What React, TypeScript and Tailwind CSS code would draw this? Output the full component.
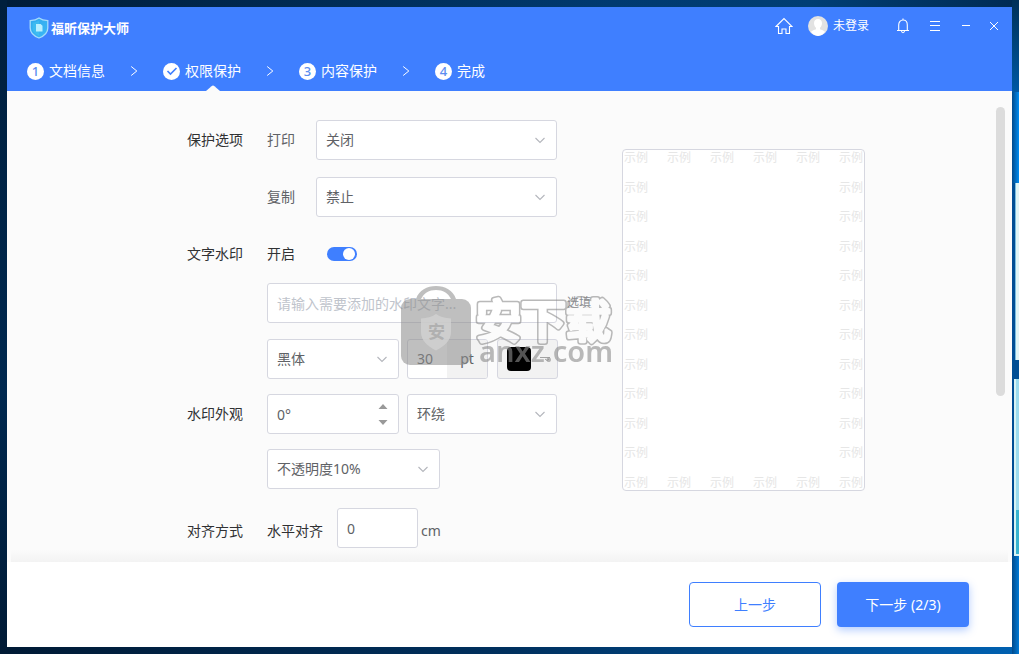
import React from "react";

const field =
  "h-10 rounded-[3px] border border-[#d6d7e0] bg-white text-sm text-[#606266] outline-none";

function Chevron({ className }: { className: string }) {
  return (
    <svg viewBox="0 0 10 10" className={className} fill="none" stroke="#b4b6bc" strokeWidth="1.1" aria-hidden="true">
      <path d="M.5 3L5 7.500 9.500 3" />
    </svg>
  );
}

function Select({ label, value, width }: { label: string; value: string; width: string }) {
  return (
    <div className={`relative ${width}`}>
      <select aria-label={label} className={`${field} w-full appearance-none pl-[9px]`}>
        <option>{value}</option>
      </select>
      <Chevron className="pointer-events-none absolute right-3 top-[15px] size-[10px]" />
    </div>
  );
}

function Row({
  title,
  className = "",
  height = "h-10",
  children,
}: {
  title?: string;
  className?: string;
  height?: string;
  children: React.ReactNode;
}) {
  return (
    <div className={`flex items-center ${height} ${className}`}>
      <div className="w-20 shrink-0 text-sm text-[#303133]">{title}</div>
      {children}
    </div>
  );
}

function Logo() {
  return (
    <svg viewBox="0 0 20 22" className="h-[22px] w-5" aria-hidden="true">
      <defs>
        <linearGradient id="shield" x1="0" y1="0" x2="1" y2="1">
          <stop offset="0" stopColor="#2fa8ee" />
          <stop offset="1" stopColor="#3cb8f5" />
        </linearGradient>
      </defs>
      <path
        d="M10 1C7.6 2.800 4.600 3.500 1.200 3.600V11c0 4.800 3.600 8 8.800 10 5.200-2 8.800-5.200 8.800-10V3.600C15.400 3.500 12.400 2.800 10 1z"
        fill="url(#shield)"
        stroke="#a5dcfb"
        strokeWidth="1.3"
      />
      <path d="M10 3.500C8 4.800 6 5.300 3.400 5.500V11c0 3.500 2.600 6 6.600 7.800z" fill="#46c8f0" opacity=".5" />
      <path d="M7 7h4.600L13.500 8.800V14.500H7z" fill="#b9efff" />
    </svg>
  );
}

function StepArrow() {
  return (
    <svg viewBox="0 0 8 10" className="mx-[25px] h-[10px] w-2" fill="none" stroke="#fff" aria-hidden="true">
      <path d="M1.200 .5L6.800 5l-5.600 4.500" />
    </svg>
  );
}

const steps = ["文档信息", "权限保护", "内容保护", "完成"];

function Steps() {
  return (
    <ol className="flex items-center pl-5 text-sm text-white">
      {steps.map((name, i) => (
        <li key={name} className="flex items-center">
          {i > 0 && <StepArrow />}
          <span className="relative flex h-10 items-center gap-[5px]">
            <span className="flex size-[17px] items-center justify-center rounded-full bg-white text-[13px] font-medium text-[#5b8df0]">
              {i === 1 ? (
                <svg viewBox="0 0 12 12" className="size-3" fill="none" stroke="#3f7fff" strokeWidth="1.6" aria-hidden="true">
                  <path d="M1.500 6l3 3 6-6" />
                </svg>
              ) : (
                i + 1
              )}
            </span>
            {name}
            {i === 1 && (
              <svg viewBox="0 0 14 6" className="absolute bottom-0 left-[43px] h-[6px] w-[14px]" aria-hidden="true">
                <path d="M0 6L5.500 1.200q1.500-1.200 3 0L14 6z" fill="#fbfbfb" />
              </svg>
            )}
          </span>
        </li>
      ))}
    </ol>
  );
}

function Header() {
  return (
    <header className="flex h-[84px] shrink-0 flex-col bg-[#3f7fff]">
      <div className="flex h-11 items-center pb-[7px] pl-[22px] pr-[14px] text-white">
        <div className="flex items-center gap-[2px] pt-1">
          <Logo />
          <h1 className="text-[13px] font-bold leading-5">福昕保护大师</h1>
        </div>
        <div className="ml-auto flex items-center">
          <button aria-label="主页">
            <svg viewBox="0 0 18 18" className="size-[18px]" fill="none" stroke="currentColor" strokeWidth="1.1" aria-hidden="true">
              <path d="M1 9.500L9 1.500l8 8h-2.500v7h-3.500v-4.500H7v4.500H3.500v-7z" />
            </svg>
          </button>
          <button className="ml-[15px] flex items-center gap-[5px] text-xs">
            <svg viewBox="0 0 20 20" className="size-5" aria-hidden="true">
              <circle cx="10" cy="10" r="10" fill="#e2e2e2" />
              <path d="M10 3c-2.700 0-4 1.800-4 4.300 0 1.900.8 3.500 2 4.500v1.500c-1.800.6-3.700 1.200-5 2.500A10 10 0 0 0 10 20a10 10 0 0 0 7-4.200c-1.300-1.300-3.200-1.900-5-2.500v-1.500c1.200-1 2-2.600 2-4.500C14 4.800 12.700 3 10 3z" fill="#fff" />
            </svg>
            未登录
          </button>
          <button aria-label="通知" className="ml-[27px]">
            <svg viewBox="0 0 14 16" className="h-4 w-[14px]" fill="none" stroke="currentColor" strokeWidth="1.1" aria-hidden="true">
              <path d="M7 .5v1.500M1 12.500h12M2.700 12.500V7c0-3 1.800-5 4.300-5s4.300 2 4.300 5v5.500M5.500 13c.2 1.200.7 1.700 1.500 1.700s1.300-.5 1.500-1.700" />
            </svg>
          </button>
          <button aria-label="菜单" className="ml-5">
            <svg viewBox="0 0 10 10" className="size-[10px]" stroke="currentColor" aria-hidden="true">
              <path d="M0 .5h10M0 4.500h10M0 9.500h10" />
            </svg>
          </button>
          <button aria-label="最小化" className="ml-[22px]">
            <svg viewBox="0 0 8 10" className="h-[10px] w-2" stroke="currentColor" aria-hidden="true">
              <path d="M0 4.500h8" />
            </svg>
          </button>
          <button aria-label="关闭窗口" className="ml-5">
            <svg viewBox="0 0 8 8" className="size-2" stroke="currentColor" aria-hidden="true">
              <path d="M0 0l8 8M8 0L0 8" />
            </svg>
          </button>
        </div>
      </div>
      <Steps />
    </header>
  );
}

function SiteMark() {
  return (
    <svg
      viewBox="0 0 216 84"
      className="pointer-events-none absolute left-[214px] top-[165px] h-[84px] w-[216px]"
      aria-hidden="true"
    >
      <defs>
        <mask id="hollow" maskUnits="userSpaceOnUse" x="0" y="0" width="216" height="84">
          <rect width="216" height="84" fill="#fff" />
          <text x="75" y="53" fontSize="45" fontWeight="500" fontFamily="Noto Sans CJK SC, sans-serif" fill="#000" stroke="#000" strokeWidth="3.5" strokeLinejoin="round">
            安下载
          </text>
        </mask>
      </defs>
      <g fill="#8c8c8c" opacity=".55">
        <path d="M15 14C18 5 26 1 35 1s17 4 20 13h-5C47 8 42 5 35 5s-12 3-15 9z" />
        <rect y="14" width="70" height="66" rx="9" />
      </g>
      <path d="M35 29c-4.500 3-9 4-15 4.500V47c0 8 6 14 15 18.500C44 61 50 55 50 47V33.500C44 33 39.500 32 35 29z" fill="#d2d2d2" opacity=".8" />
      <text x="27" y="53" fontSize="17" fontWeight="700" fontFamily="Noto Sans CJK SC, sans-serif" fill="#b0b0b0">
        安
      </text>
      <g fill="#8c8c8c" opacity=".6">
        <g mask="url(#hollow)">
          <text x="75" y="53" fontSize="45" fontWeight="500" fontFamily="Noto Sans CJK SC, sans-serif" stroke="#8c8c8c" strokeWidth="6.5" strokeLinejoin="round">
            安下载
          </text>
        </g>
        <text x="78" y="77" fontSize="29" fontWeight="600" fontFamily="Noto Sans, sans-serif">
          anxz.com
        </text>
      </g>
    </svg>
  );
}

function Form() {
  return (
    <form className="relative w-[435px] shrink-0" onSubmit={(e) => e.preventDefault()}>
      <Row title="保护选项">
        <span className="w-[49px] text-sm text-[#606266]">打印</span>
        <Select label="打印" value="关闭" width="w-[241px]" />
      </Row>
      <Row className="mt-[17px]">
        <span className="w-[49px] text-sm text-[#606266]">复制</span>
        <Select label="复制" value="禁止" width="w-[241px]" />
      </Row>
      <Row title="文字水印" className="mt-[17px]">
        <label className="flex items-center text-sm text-[#303133]">
          <span className="w-[60px]">开启</span>
          <input type="checkbox" role="switch" defaultChecked className="peer sr-only" />
          <span className="flex h-[14px] w-[30px] items-center justify-end rounded-full bg-[#3f7fff] px-[2px]">
            <span className="size-3 rounded-full bg-white" />
          </span>
        </label>
      </Row>
      <Row className="mt-[9px]">
        <input
          aria-label="水印文字"
          placeholder="请输入需要添加的水印文字..."
          className={`${field} w-[290px] px-[9px] placeholder:text-[#c0c4cc]`}
        />
        <span className="ml-[10px] text-xs text-[#8a8c90]">选填</span>
      </Row>
      <Row className="mt-4">
        <Select label="字体" value="黑体" width="w-[132px]" />
        <div className={`${field} ml-2 flex w-[81px] overflow-hidden`}>
          <input aria-label="字号" defaultValue="30" className="w-[39px] pl-[9px] outline-none" />
          <span className="flex flex-1 items-center justify-center bg-[#f2f2f2]">pt</span>
        </div>
        <button aria-label="颜色" className="ml-[9px] flex h-10 w-[61px] items-center rounded-[3px] border border-[#d6d7e0] bg-[#f2f2f2] pl-[9px]">
          <span className="size-6 rounded-sm bg-black" />
          <svg viewBox="0 0 10 4" className="ml-[9px] h-1 w-[10px]" fill="none" stroke="#a3a3a3" aria-hidden="true">
            <path d="M0 .5h10M5 2l2 1.500L9 2" />
          </svg>
        </button>
      </Row>
      <Row title="水印外观" className="mt-[15px]">
        <div className="relative w-[132px]">
          <input aria-label="角度" defaultValue="0°" className={`${field} w-full pl-[9px]`} />
          <svg viewBox="0 0 10 22" className="pointer-events-none absolute right-[11px] top-[9px] h-[22px] w-[10px]" fill="#999" aria-hidden="true">
            <path d="M.5 6L5 1l4.500 5zM.5 17h9L5 22z" />
          </svg>
        </div>
        <div className="w-2" />
        <Select label="排列" value="环绕" width="w-[150px]" />
      </Row>
      <Row className="mt-[15px]">
        <Select label="不透明度" value="不透明度10%" width="w-[173px]" />
      </Row>
      <Row title="对齐方式" height="h-[45px]" className="mt-[19px]">
        <label htmlFor="align" className="w-[70px] text-sm text-[#303133]">
          水平对齐
        </label>
        <input id="align" defaultValue="0" className={`${field} w-[81px] self-start pl-[9px]`} />
        <span className="ml-[3px] text-sm text-[#606266]">cm</span>
      </Row>
      <SiteMark />
    </form>
  );
}

function Preview() {
  return (
    <div className="mt-[29px] flex h-[342px] w-[243px] shrink-0 flex-col justify-between rounded-[4px] border border-[#d6d7e0] bg-white px-px pt-px text-xs leading-[14px] text-[#e6e6e6]">
      {Array.from({ length: 12 }, (_, r) => (
        <div key={r} className="flex justify-between">
          {Array.from({ length: r === 0 || r === 11 ? 6 : 2 }, (_, c) => (
            <span key={c}>示例</span>
          ))}
        </div>
      ))}
    </div>
  );
}

export default function App() {
  return (
    <div className="flex h-screen bg-[#012349] font-['Noto_Sans','Noto_Sans_CJK_SC',sans-serif]">
      <div className="w-[7px] shrink-0 bg-[linear-gradient(#001f3d,#00284f_60%,#001a35)]" />
      <div className="flex min-w-0 flex-1 flex-col">
        <div className="h-[7px] shrink-0 bg-[linear-gradient(90deg,#001c38,#003a70_60%,#003e75_80%,#002b54)]" />
        <Header />
        <main className="relative flex min-h-0 flex-1 justify-center overflow-hidden bg-[#fbfbfb] pl-[33px] pt-[29px]">
          <div className="flex shrink-0 self-start">
            <Form />
            <Preview />
          </div>
          <div className="absolute right-[7px] top-4 h-[289px] w-[9px] rounded-full bg-[#dcdcdc]" />
          <div className="absolute inset-x-1 bottom-0 h-3 bg-linear-to-b from-transparent to-[#f3f3f3]" />
        </main>
        <footer className="flex h-[85px] shrink-0 items-center justify-end gap-4 bg-white pr-[43px] text-sm">
          <button className="h-[45px] w-[132px] rounded-[4px] border border-[#3f7fff] text-[#3f7fff]">上一步</button>
          <button className="h-[45px] w-[132px] rounded-[4px] bg-[#3f7fff] text-white shadow-[0_3px_8px_rgba(63,127,255,0.4)]">
            下一步 (2/3)
          </button>
        </footer>
        <div className="h-[7px] shrink-0 bg-[linear-gradient(90deg,#001a35,#00305e_50%,#0060b0)]" />
      </div>
      <div className="flex w-[7px] shrink-0 flex-col bg-[#004e94]">
        <div className="h-[14%] bg-linear-to-b from-[#003058] to-[#0058a4]" />
        <div className="h-[14%] bg-linear-to-r from-[#004a8c] to-[#008cf0]" />
        <div className="ml-[3px] h-[27%] border-l border-[#79bde0] bg-[#dff5f6]" />
        <div className="h-[3%]" />
        <div className="ml-[2px] h-[20%] border-l-2 border-[#d8f3f4] bg-[#9cdcee]" />
        <div className="ml-[2px] h-[7%] border-b-2 border-l-2 border-[#d8f3f4] bg-[#38b4d0]" />
        <div className="flex-1 bg-linear-to-r from-[#004a8c] to-[#007ad6]" />
      </div>
    </div>
  );
}
